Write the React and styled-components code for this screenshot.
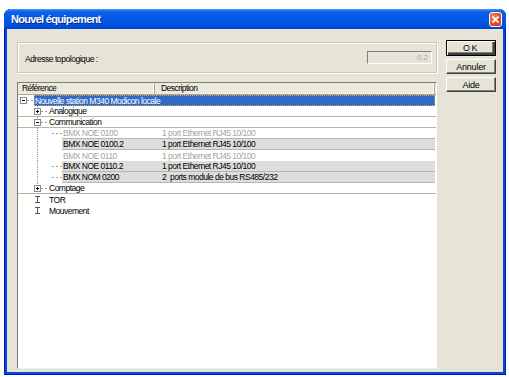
import React from 'react';
import styled, { createGlobalStyle } from 'styled-components';

const Global = createGlobalStyle`
  html, body { margin: 0; padding: 0; background: #fff; }
  body { font-family: "Liberation Sans", Arial, sans-serif; }
  * { box-sizing: border-box; }
`;

const Window = styled.div`
  margin: 9px 0 0 4px;
  width: 502px;
  height: 366px;
  background: #0a45dd;
  border-radius: 7px 7px 0 0;
  display: flex;
  flex-direction: column;
  box-shadow: inset 1px 0 #0019b0, inset -1px 0 #0019b0, inset 0 -1px #0019b0;
`;

const TitleBar = styled.div`
  height: 20px;
  flex: none;
  display: flex;
  align-items: center;
  justify-content: space-between;
  padding: 0 4px 0 7px;
  border-radius: 7px 7px 0 0;
  background: linear-gradient(to bottom, #4a9cff 0%, #0f62ea 12%, #0058e6 45%, #0053df 80%, #0046cc 100%);
`;

const Title = styled.span`
  color: #fff;
  font-weight: bold;
  font-size: 11px;
  letter-spacing: -0.7px;
  text-shadow: 1px 1px 0 #0a2a8a;
`;

const CloseButton = styled.span`
  width: 13px;
  height: 15px;
  border: 1px solid #fff;
  border-radius: 3px;
  background: radial-gradient(circle at 30% 30%, #f08a6a 0%, #e0502a 55%, #c83a16 100%);
  display: flex;
  align-items: center;
  justify-content: center;
`;

const Content = styled.div`
  flex: 1;
  margin: 0 3px 3px 3px;
  background: #e5e4d7;
  display: flex;
  gap: 9px;
  padding: 11px 7px 3px 10px;
`;

const Main = styled.div`
  width: 420px;
  margin-top: 2px;
  display: flex;
  flex-direction: column;
  gap: 9px;
`;

const GroupBox = styled.div`
  height: 31px;
  border: 1px solid #c9c7b8;
  box-shadow: inset 1px 1px 0 #fff, 1px 1px 0 #fff;
  display: flex;
  align-items: center;
  justify-content: space-between;
  padding: 0 4px 0 7px;
`;

const Label = styled.span`
  font-size: 8.5px;
  letter-spacing: -0.45px;
  color: #000;
  margin-top: 2px;
`;

const Field = styled.div`
  width: 65px;
  height: 13px;
  border-style: solid;
  border-width: 1px;
  border-color: #808080 #fff #fff #808080;
  font-size: 8px;
  color: #a8a8a0;
  text-align: right;
  padding-right: 3px;
  line-height: 11px;
`;

const ListView = styled.div`
  height: 287px;
  background: #fff;
  border-style: solid;
  border-width: 1px;
  border-color: #7f7d70 #fff #f0efe6 #7f7d70;
  display: flex;
  flex-direction: column;
`;

const Header = styled.div`
  display: flex;
  height: 12px;
  background: #ebeadb;
  border-bottom: 1px solid #aca899;
`;

const HeaderCell = styled.div`
  width: ${p => (p.$w ? `${p.$w}px` : 'auto')};
  flex: ${p => (p.$w ? 'none' : 1)};
  font-size: 8.5px;
  letter-spacing: -0.55px;
  line-height: 11px;
  padding-left: ${p => p.$pad}px;
  border-right: 1px solid #aca899;
  box-shadow: inset -1px 0 #fff;
`;

const HeaderRest = styled.div`
  width: 1px;
`;

const Row = styled.div`
  display: flex;
  height: 11px;
  border-bottom: ${p => (p.$line ? '1px solid #b9b6a6' : 'none')};
  padding-left: 2px;
`;

const Gutter = styled.svg`
  flex: none;
  display: block;
`;

const RowBody = styled.div`
  flex: 1;
  display: grid;
  grid-template-columns: ${p => p.$refw}px 1fr;
  align-items: center;
  background: ${p => (p.$selected ? '#316ac5' : p.$shade ? '#dddddd' : 'transparent')};
  outline: ${p => (p.$selected ? '1px dotted #c9a86a' : 'none')};
  outline-offset: -1px;
  border-bottom: ${p => (p.$under ? '1px solid #b9b6a6' : 'none')};
  margin-right: 1px;
  color: ${p => (p.$selected ? '#fff' : p.$muted ? '#a4a4a4' : '#000')};
  font-size: 8.5px;
  letter-spacing: -0.5px;
  line-height: 10px;
  white-space: pre;
`;

const RefText = styled.span`
  padding-left: 1px;
`;

const DescText = styled.span`
  padding-left: 7px;
`;

const Side = styled.div`
  width: 50px;
  display: flex;
  flex-direction: column;
  gap: 3px;
`;

const Button = styled.div`
  height: ${p => (p.$default ? 16 : 15)}px;
  background: #e5e4d7;
  border-style: solid;
  border-width: 1px;
  border-color: ${p => (p.$default ? '#000' : '#fff #404040 #404040 #fff')};
  box-shadow: ${p =>
    p.$default
      ? 'inset 1px 1px #fff, inset -2px -2px #404040, inset -3px -3px #808080'
      : 'inset -1px -1px #808080'};
  font-size: 9px;
  letter-spacing: ${p => (p.$wide ? '1.5px' : '-0.2px')};
  display: flex;
  align-items: center;
  justify-content: center;
  color: #000;
`;

const DOT = '#9c9c9c';

function Node({ level, kind, vline }) {
  const w = (level + 1) * 14;
  const off = level * 14;
  return (
    <Gutter width={w} height={11} shapeRendering="crispEdges">
      {level === 2 && (
        <line x1={17.5} y1={0} x2={17.5} y2={11} stroke={DOT} strokeDasharray="1 1" />
      )}
      {vline && <line x1={off + 3.5} y1={0} x2={off + 3.5} y2={11} stroke={DOT} strokeDasharray="1 1" />}
      {(kind === 'plus' || kind === 'minus') && (
        <>
          <rect x={off + 0.5} y={2.5} width={6} height={6} fill="#fff" stroke="#8a8a8a" />
          <line x1={off + 2} y1={5.5} x2={off + 5} y2={5.5} stroke="#000" />
          {kind === 'plus' && <line x1={off + 3.5} y1={4} x2={off + 3.5} y2={7} stroke="#000" />}
          <line x1={off + 7} y1={5.5} x2={off + 14} y2={5.5} stroke={DOT} strokeDasharray="2 2" />
        </>
      )}
      {kind === 'stub' && (
        <>
          <line x1={off + 1} y1={2.5} x2={off + 6} y2={2.5} stroke="#555" />
          <line x1={off + 3.5} y1={2} x2={off + 3.5} y2={8} stroke="#555" />
          <line x1={off + 1} y1={8.5} x2={off + 6} y2={8.5} stroke="#555" />
        </>
      )}
      {kind === 'dash' && (
        <line x1={off + 4} y1={5.5} x2={off + 14} y2={5.5} stroke={DOT} strokeDasharray="2 2" />
      )}
    </Gutter>
  );
}

const ETH = '1 port Ethernet RJ45 10/100';

const rows = [
  { level: 0, kind: 'minus', label: 'Nouvelle station M340 Modicon locale', selected: true },
  { level: 1, kind: 'plus', label: 'Analogique', line: true, vline: true },
  { level: 1, kind: 'minus', label: 'Communication', line: true, vline: true },
  { level: 2, kind: 'dash', label: 'BMX NOE 0100', desc: ETH, muted: true, under: true },
  { level: 2, kind: 'none', label: 'BMX NOE 0100.2', desc: ETH, shade: true, under: true },
  { level: 2, kind: 'none', label: 'BMX NOE 0110', desc: ETH, muted: true },
  { level: 2, kind: 'dash', label: 'BMX NOE 0110.2', desc: ETH, shade: true, under: true },
  { level: 2, kind: 'dash', label: 'BMX NOM 0200', desc: '2  ports module de bus RS485/232', shade: true, under: true },
  { level: 1, kind: 'plus', label: 'Comptage', line: true, vline: true },
  { level: 1, kind: 'stub', label: 'TOR' },
  { level: 1, kind: 'stub', label: 'Mouvement' },
];

export default function App() {
  return (
    <>
      <Global />
      <Window>
        <TitleBar>
          <Title>Nouvel équipement</Title>
          <CloseButton>
            <svg width="7" height="7" viewBox="0 0 7 7">
              <path d="M0.5 0.5 L6.5 6.5 M6.5 0.5 L0.5 6.5" stroke="#fff" strokeWidth="1.6" />
            </svg>
          </CloseButton>
        </TitleBar>
        <Content>
          <Main>
            <GroupBox>
              <Label>Adresse topologique :</Label>
              <Field>0.2</Field>
            </GroupBox>
            <ListView>
              <Header>
                <HeaderCell $w={137} $pad={4}>Référence</HeaderCell>
                <HeaderCell $pad={6}>Description</HeaderCell>
                <HeaderRest />
              </Header>
              {rows.map((r, i) => {
                const start = 18 + 2 + (r.level + 1) * 14;
                return (
                  <Row key={i} $line={r.line}>
                    <Node level={r.level} kind={r.kind} vline={r.vline} />
                    <RowBody
                      $refw={155 - start}
                      $selected={r.selected}
                      $shade={r.shade}
                      $muted={r.muted}
                      $under={r.under}
                    >
                      <RefText>{r.label}</RefText>
                      <DescText>{r.desc || ''}</DescText>
                    </RowBody>
                  </Row>
                );
              })}
            </ListView>
          </Main>
          <Side>
            <Button $default $wide>OK</Button>
            <Button>Annuler</Button>
            <Button>Aide</Button>
          </Side>
        </Content>
      </Window>
    </>
  );
}
